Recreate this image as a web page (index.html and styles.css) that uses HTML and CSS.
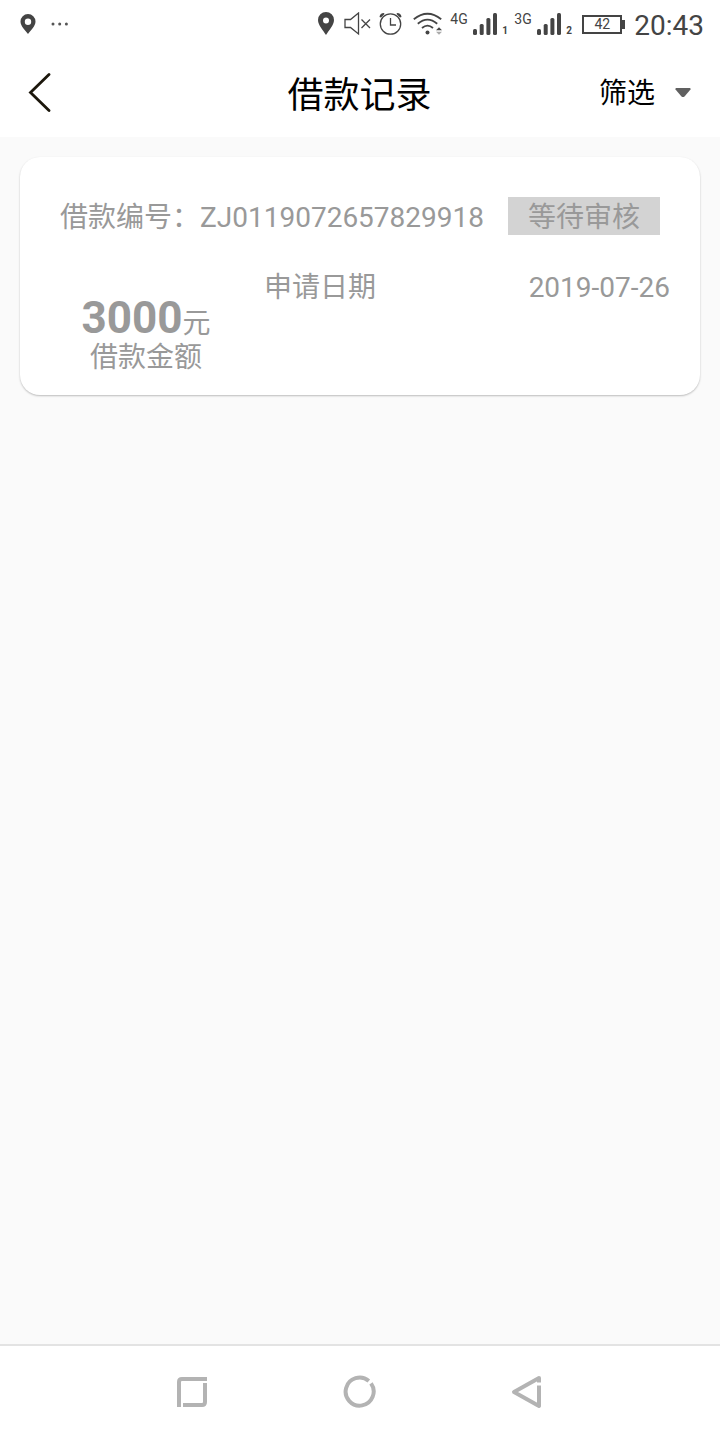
FILE: index.html
```html
<!DOCTYPE html>
<html lang="zh-CN">
<head>
<meta charset="utf-8">
<meta name="viewport" content="width=device-width, initial-scale=1">
<title>借款记录</title>
<link rel="stylesheet" href="styles.css">
</head>
<body>
<div class="screen">
  <div class="status">
    <div class="status-left">
      <svg width="16" height="22" viewBox="0 0 16 22"><path fill="#444" fill-rule="evenodd" d="M8 1a7.500 7.500 0 0 0-7.500 7.500C.5 13 5 17 8 21c3-4 7.500-8 7.500-12.500A7.500 7.500 0 0 0 8 1zm0 4.500a3.200 3.200 0 1 1 0 6.400 3.200 3.200 0 0 1 0-6.400z"/></svg>
      <svg width="18" height="22" viewBox="0 0 18 22" fill="#555"><circle cx="2" cy="11" r="1.500"/><circle cx="8.700" cy="11" r="1.500"/><circle cx="15.400" cy="11" r="1.500"/></svg>
    </div>
    <div class="status-right">
      <svg class="pin" width="16" height="24" viewBox="0 0 16 24"><path fill="#444" fill-rule="evenodd" d="M8 0a8 8 0 0 0-8 8c0 5 5 10 8 15 3-5 8-10 8-15a8 8 0 0 0-8-8zm0 5.500a3 3 0 1 1 0 6 3 3 0 0 1 0-6z"/></svg>
      <svg class="mute" width="27" height="24" viewBox="0 0 27 24" fill="none" stroke="#444" stroke-width="1.300"><path d="M1 7.500h5.500l8-6.500v21l-8-6.500H1zM17.500 7.500l8.500 8.500M26 7.500L17.500 16"/></svg>
      <svg class="alarm" width="23" height="24" viewBox="0 0 23 24" fill="none" stroke="#444" stroke-width="1.300"><circle cx="11.500" cy="12" r="10.200"/><path d="M11.500 6v7h5.500"/><path fill="#444" stroke="none" d="M.5 5Q1 1 5 1l.5 1L2 5.500zM22.500 5Q22 1 18 1l-.5 1L21 5.500z"/></svg>
      <svg class="wifi" width="29" height="24" viewBox="0 0 29 24" fill="none" stroke="#444" stroke-width="1.800"><path d="M.8 7.200Q14.500-3.800 28.200 7.200M4.800 11.800Q14.500 3.500 24.200 11.800M9 16Q14.500 11.200 20 16"/><circle cx="14.500" cy="20.500" r="2" fill="#444" stroke="none"/><path d="M23 18.300l3-3 3 3z" fill="#444" stroke="none"/><path d="M23 19.700l3 3 3-3z" fill="#aaa" stroke="none"/></svg>
      <span class="net">4G</span>
      <svg class="bars" width="24" height="24" viewBox="0 0 24 24" fill="#444"><rect y="17" width="4" height="6" rx="1.500"/><rect x="6.700" y="12" width="4" height="11" rx="1.500"/><rect x="13.400" y="6" width="4" height="17" rx="1.500"/><rect x="20" y="1" width="4" height="22" rx="1.500"/></svg>
      <span class="sim">1</span>
      <span class="net">3G</span>
      <svg class="bars" width="24" height="24" viewBox="0 0 24 24" fill="#444"><rect y="17" width="4" height="6" rx="1.500"/><rect x="6.700" y="12" width="4" height="11" rx="1.500"/><rect x="13.400" y="6" width="4" height="17" rx="1.500"/><rect x="20" y="1" width="4" height="22" rx="1.500"/></svg>
      <span class="sim">2</span>
      <span class="battery">42</span>
      <time class="clock">20:43</time>
    </div>
  </div>
  <header class="header">
    <button class="back" type="button" aria-label="返回"><svg width="24" height="40" viewBox="0 0 24 40" fill="none" stroke="#1c170c" stroke-width="2.800" stroke-linecap="round"><path d="M21 1.500L2.500 19.500l18.500 18"/></svg></button>
    <h1 class="title">借款记录</h1>
    <button class="filter" type="button"><span class="filter-text">筛选</span><svg width="16" height="10" viewBox="0 0 16 10"><path fill="#606060" d="M1 0h14q1 .5.500 1.500L9.500 8.500q-1.500 1.200-3 0L.5 1.500Q0 .5 1 0z"/></svg></button>
  </header>
  <main class="list">
    <article class="card">
      <div class="card-head">
        <span class="number">借款编号：ZJ0119072657829918</span>
        <span class="badge">等待审核</span>
      </div>
      <div class="card-body">
        <div class="amount">
          <div class="value"><strong>3000</strong>元</div>
          <div class="label">借款金额</div>
        </div>
        <div class="date"><span>申请日期</span><time>2019-07-26</time></div>
      </div>
    </article>
  </main>
  <nav class="nav">
    <button type="button" aria-label="最近任务"><svg width="34" height="34" viewBox="0 0 34 34" fill="none" stroke="#b3b3b3" stroke-width="4"><path d="M4 32V7q0-3 3-3h25M30 8v19q0 3-3 3H8"/></svg></button>
    <button type="button" aria-label="主屏幕"><svg width="34" height="34" viewBox="0 0 34 34" fill="none" stroke="#b3b3b3" stroke-width="4"><path d="M25.800 6A14 14 0 1 0 28 8.400"/></svg></button>
    <button type="button" aria-label="返回"><svg width="34" height="34" viewBox="0 0 34 34" fill="none" stroke="#b3b3b3" stroke-width="4" stroke-linejoin="round"><path d="M28 7.500V3L3 17l25 14V10.500"/></svg></button>
  </nav>
</div>
</body>
</html>
```
FILE: styles.css
```css
* { box-sizing: border-box; }
body {
  margin: 0;
  font-family: Roboto, "Noto Sans CJK SC", sans-serif;
  font-size: 28px;
  line-height: 38px;
  background: #fafafa;
}
svg { display: block; flex: none; }
button { padding: 0; border: 0; background: none; font: inherit; color: inherit; }
.screen { display: flex; flex-direction: column; min-height: 100vh; }

.status {
  display: flex;
  justify-content: space-between;
  align-items: center;
  height: 48px;
  padding: 0 16px 0 20px;
  background: #fff;
  color: #444;
}
.status-left { display: flex; align-items: center; gap: 15px; }
.status-right { display: flex; align-items: center; }
.mute { margin-left: 10px; }
.alarm { margin-left: 8px; }
.wifi { margin-left: 11px; }
.net {
  width: 23px;
  margin-left: 8px;
  padding-bottom: 11px;
  font-size: 14px;
  line-height: 16px;
}
.sim {
  width: 4px;
  margin-left: 5px;
  padding-top: 14px;
  font-size: 10px;
  font-weight: 700;
  line-height: 12px;
}
.battery {
  position: relative;
  width: 40px;
  margin: 0 12px;
  border: 2px solid #444;
  font-size: 14px;
  line-height: 15px;
  text-align: center;
}
.battery::after {
  content: "";
  position: absolute;
  top: 3px;
  right: -5px;
  width: 3px;
  height: 9px;
  background: #444;
}
.clock { padding-top: 4px; }

.header {
  display: grid;
  grid-template-columns: 1fr auto 1fr;
  align-items: center;
  height: 89px;
  padding: 0 29px 0 28px;
  background: #fff;
  color: #000;
}
.title { margin: 0; padding-top: 6px; font-size: 36px; font-weight: 400; line-height: 48px; }
.back { justify-self: start; }
.filter { display: flex; align-items: center; gap: 20px; justify-self: end; }
.filter-text { padding-top: 2px; }

.list { flex: 1; padding: 20px; }
.card {
  padding: 40px 30px 24px 40px;
  border-radius: 20px;
  background: #fff;
  color: #999;
  box-shadow: 0 1px 2px rgba(0, 0, 0, 0.25);
}
.card-head {
  display: flex;
  justify-content: space-between;
  padding-right: 10px;
  line-height: 34px;
}
.number { padding-top: 4px; }
.badge { padding: 4px 20px 0; background: #d3d3d3; }
.card-body { display: flex; gap: 32px; padding-top: 34px; }
.amount { width: 172px; padding-top: 28px; text-align: center; }
.value { line-height: 42px; }
.value strong { font-size: 44px; font-weight: 700; }
.label { line-height: 26px; }
.date { display: flex; flex: 1; justify-content: space-between; }

.nav {
  display: flex;
  justify-content: center;
  align-items: center;
  gap: 134px;
  height: 96px;
  padding-bottom: 2px;
  border-top: 2px solid #e3e3e3;
  background: #fff;
}
```
